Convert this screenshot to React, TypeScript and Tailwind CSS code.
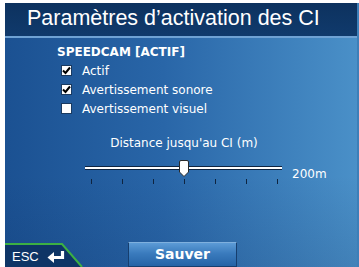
import React from "react";

function Check({ checked }: { checked: boolean }) {
  return (
    <div className="w-[11px] h-[11px] bg-white border border-[#1a3a60] flex items-center justify-center shrink-0">
      {checked && (
        <svg width="9" height="9" viewBox="0 0 9 9">
          <path d="M1 4.5 L3.5 7 L8 1.5" stroke="#000" strokeWidth="2" fill="none" />
        </svg>
      )}
    </div>
  );
}

export default function App() {
  const ticks = [0, 1, 2, 3, 4, 5, 6];
  return (
    <div className="w-[359px] h-[267px] bg-white pl-[5px] pt-[3px] overflow-hidden" style={{ fontFamily: '"DejaVu Sans", Verdana, sans-serif' }}>
      <div className="w-[354px] h-[264px] flex flex-col bg-[linear-gradient(90deg,#1b5192_0%,#2966a8_45%,#4a90c8_100%)] border-r-[2px] border-[#3d7fb8]">
        <div
          className="h-[35px] shrink-0 bg-[linear-gradient(180deg,#0d325f_0%,#103a6c_100%)] flex items-center pl-[22px] pb-[2px] text-white text-[21.5px] leading-none border-b-[2px] border-[#6fa2d4]"
          style={{ fontFamily: '"Liberation Sans", Arial, sans-serif' }}
        >
          Paramètres d’activation des CI
        </div>
        <div className="flex-1 flex flex-col text-white bg-[linear-gradient(180deg,rgba(0,0,0,0)_0%,rgba(0,0,0,0)_60%,rgba(5,25,70,0.12)_100%)]">
          <div className="pl-[52px] pt-[7px]">
            <div className="text-[12px] font-bold h-[14px] leading-[14px]">SPEEDCAM [ACTIF]</div>
            <div className="flex flex-col mt-[2px] pl-[4px]">
              <div className="flex items-center gap-[10px] h-[19px] text-[12px]"><Check checked />Actif</div>
              <div className="flex items-center gap-[10px] h-[19px] text-[12px]"><Check checked />Avertissement sonore</div>
              <div className="flex items-center gap-[10px] h-[19px] text-[12px]"><Check checked={false} />Avertissement visuel</div>
            </div>
          </div>
          <div className="mt-[18px] text-[12px] leading-[14px] h-[14px] text-center pl-[6px]">Distance jusqu'au CI (m)</div>
          <div className="mt-[10px] flex items-start pl-[80px]">
            <div className="relative w-[197px] h-[24px]">
              <div className="absolute left-0 right-0 top-[6px] h-[4px] bg-white border-y border-[#0e2440]" />
              <div className="absolute left-[94px] top-0 w-[10px] h-[17px]">
                <svg width="10" height="17" viewBox="0 0 10 17">
                  <path d="M0.5 2 Q0.5 0.5 2 0.5 L8 0.5 Q9.5 0.5 9.5 2 L9.5 12 L5 16.5 L0.5 12 Z" fill="#fff" stroke="#2a2a2a" strokeWidth="1" />
                </svg>
              </div>
              <div className="absolute left-[6px] w-[187px] top-[19px] flex justify-between">
                {ticks.map((t) => (
                  <div key={t} className="w-[1px] h-[5px] bg-[#0e2440]" />
                ))}
              </div>
            </div>
            <div className="text-[12px] leading-[14px] ml-[10px] mt-[7px]">200m</div>
          </div>
          <div className="mt-auto flex items-end h-[24px]">
            <div className="relative w-[78px] h-[24px] shrink-0">
              <svg className="absolute inset-0" width="78" height="24" viewBox="0 0 78 24">
                <path d="M0 1 L57 1 L77 24 L0 24 Z" fill="#0e3566" />
                <path d="M0 1 L57 1 L77 24" stroke="#3cb043" strokeWidth="2" fill="none" />
              </svg>
              <div className="absolute left-[7px] top-[7px] flex items-center gap-[8px] text-[13px] leading-[14px]" style={{ fontFamily: '"Liberation Sans", Arial, sans-serif' }}>
                ESC
                <svg width="19" height="13" viewBox="0 0 19 13">
                  <path d="M15.5 0 L15.5 6.5 L6 6.5" stroke="#fff" strokeWidth="3.2" fill="none" />
                  <path d="M0.5 6.5 L7 1 L7 12 Z" fill="#fff" />
                </svg>
              </div>
            </div>
            <div className="ml-[45px] w-[109px] h-[25px] border border-[#163e6e] border-t-[#7fb0de] bg-[linear-gradient(180deg,#5c9bd6_0%,#3a7bbd_45%,#2563a6_100%)] flex items-center justify-center text-[14px] font-bold">
              Sauver
            </div>
          </div>
        </div>
      </div>
    </div>
  );
}
